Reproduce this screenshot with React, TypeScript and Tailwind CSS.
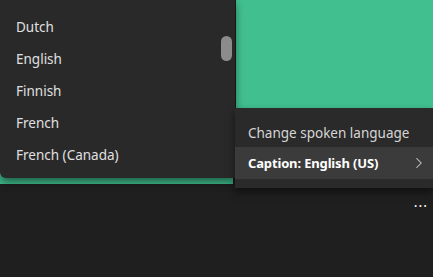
import { ChevronRight } from "lucide-react";

const languages = ["Dutch", "English", "Finnish", "French", "French (Canada)"];

export default function App() {
  return (
    <div
      className="relative h-[277px] w-[433px] overflow-hidden bg-[#1f1f1f] text-[#e6e6e6]"
      style={{ fontFamily: '"Segoe UI", "Noto Sans", "Open Sans", sans-serif' }}
    >
      {/* video tiles */}
      <div className="flex h-[184px] gap-[3px]">
        <div className="w-[233px] bg-[#3fbd8e]" />
        <div className="flex-1 bg-[#41bf8f]" />
      </div>
      <div className="flex justify-end pr-[5px] pt-[11px]">
        <span className="text-[14px] leading-none tracking-[1px] text-white">...</span>
      </div>

      {/* language list */}
      <div className="absolute left-0 top-0 h-[178px] w-[235px] rounded-bl-[6px] bg-[#292929] shadow-[0_4px_8px_rgba(0,0,0,0.5)]">
        <ul className="pl-4 pt-[12px]">
          {languages.map((l) => (
            <li key={l} className="flex h-[32px] items-center text-[13.5px] leading-none text-[#e0e0e0]">
              {l}
            </li>
          ))}
        </ul>
        <div className="absolute left-[221px] top-[36px] h-[25px] w-[11px] rounded-full bg-[#8c8c8c]" />
      </div>

      {/* caption menu */}
      <div className="absolute left-[235px] top-[108px] w-[198px] bg-[#2a2a2a] pb-[9px] shadow-[0_4px_8px_rgba(0,0,0,0.5)]">
        <div className="flex h-[39px] items-end pb-[7px] pl-[13px] text-[13.5px] leading-none text-[#d6d6d6]">
          Change spoken language
        </div>
        <div className="flex h-[32px] items-center justify-between bg-[#3b3b3b] pl-[13px] pr-[5px] text-[13px] font-bold leading-none tracking-[-0.15px] text-white">
          <span>Caption: English (US)</span>
          <ChevronRight className="h-[18px] w-[18px] text-[#cfcfcf]" strokeWidth={1.4} />
        </div>
      </div>
    </div>
  );
}
